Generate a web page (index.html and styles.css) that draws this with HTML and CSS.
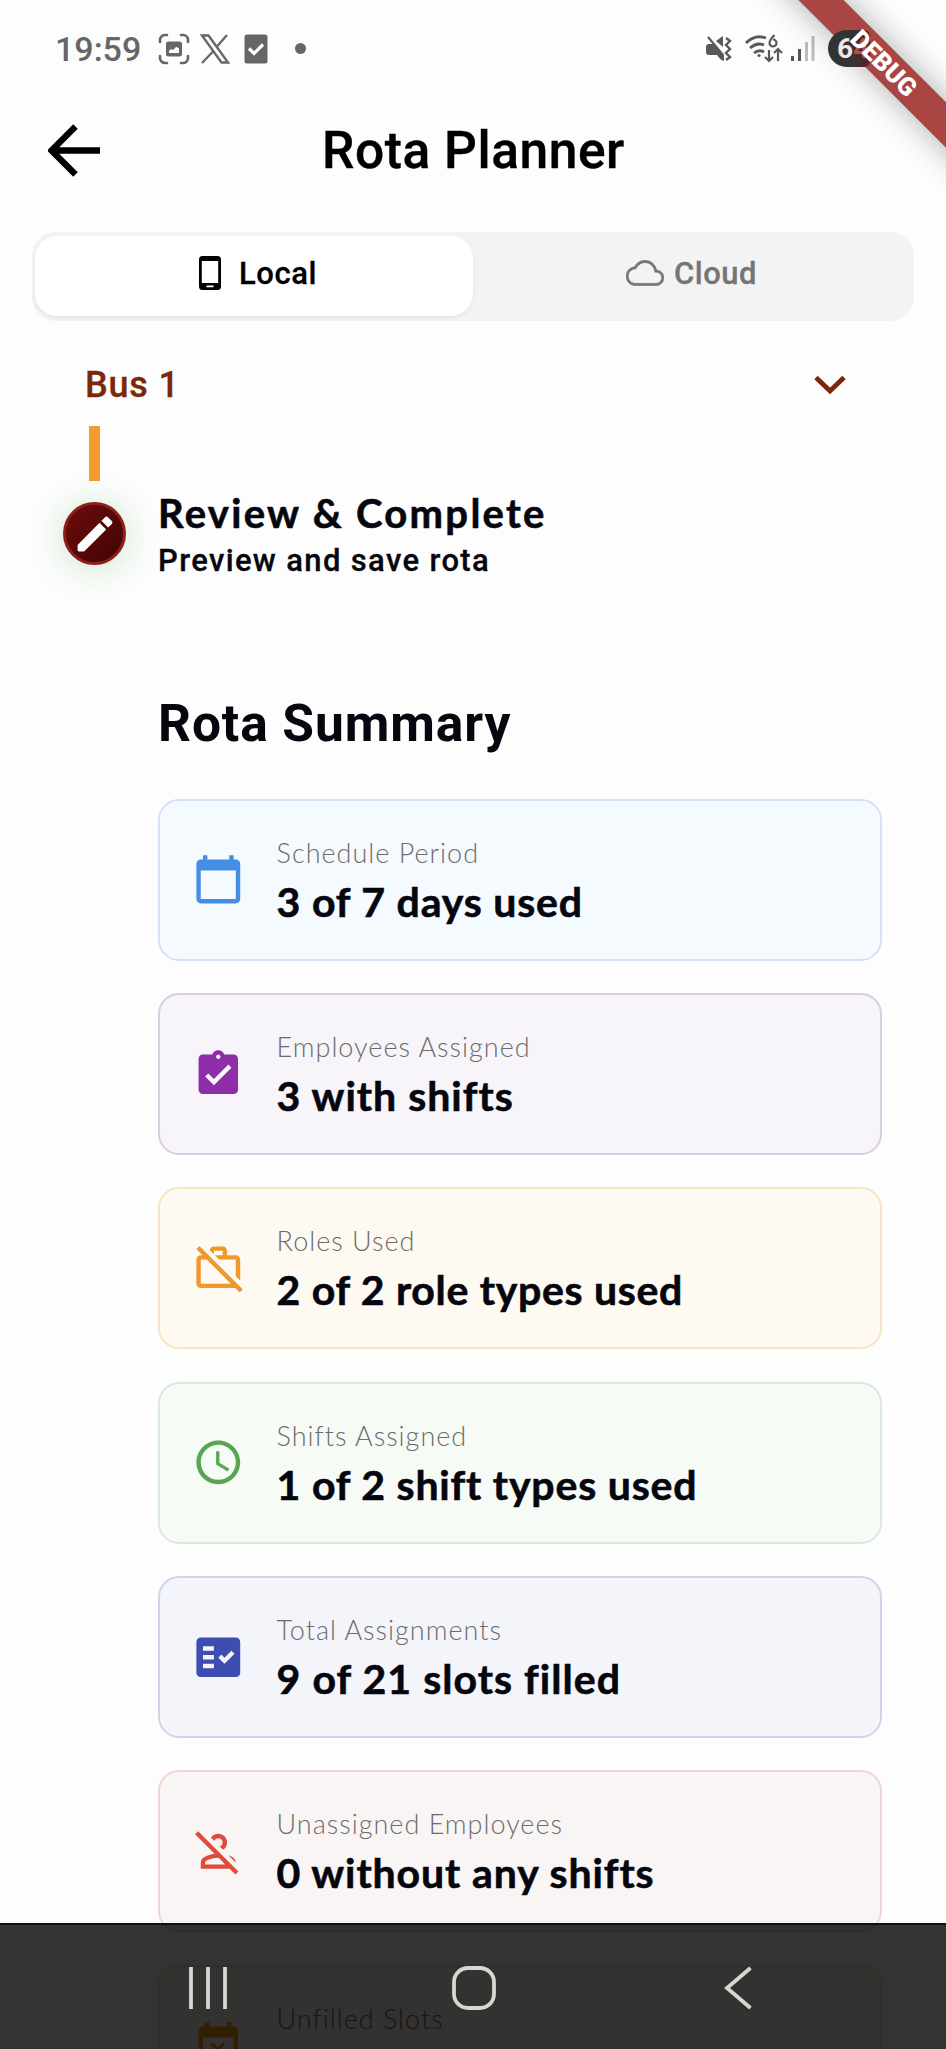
FILE: index.html
```html
<!DOCTYPE html>
<html lang="en">
<head>
<meta charset="utf-8">
<title>Rota Planner</title>
<link rel="stylesheet" href="styles.css">
</head>
<body>
<div class="screen">
  <div class="status">
    <span class="clock">19:59</span>
    <svg class="st-shot" width="32" height="32" viewBox="0 0 32 32"><g fill="none" stroke="#666" stroke-width="2.6" stroke-linecap="round"><path d="M2 9V7a5 5 0 0 1 5-5h2M23 2h2a5 5 0 0 1 5 5v2M30 23v2a5 5 0 0 1-5 5h-2M9 30H7a5 5 0 0 1-5-5v-2"/></g><path fill="#666" fill-rule="evenodd" d="M10.500 8.500h11a2.500 2.500 0 0 1 2.500 2.500v10a2.500 2.500 0 0 1-2.500 2.500h-11A2.500 2.500 0 0 1 8 21V11a2.500 2.500 0 0 1 2.500-2.500zM11 20h10v-5l-3-1-3 3-2-1-2 2z"/></svg>
    <svg class="st-x" width="30" height="30" viewBox="0 0 30 30" fill="none" stroke="#666" stroke-width="2.300"><path d="M2 1.500h6.500L28 28.500h-6.500zM27 1L16.500 13M13 17.500L2 29"/></svg>
    <svg class="st-check" width="24" height="30" viewBox="0 0 24 30"><rect x=".5" y=".5" width="23" height="29" rx="2.500" fill="#666"/><path d="M5 14.500l5 5 9-9" fill="none" stroke="#fff" stroke-width="3.200"/></svg>
    <span class="st-dot"></span>
    <svg class="st-mute" width="28" height="28" viewBox="0 0 28 28"><path fill="#595959" d="M1 12q0-3 3-3h5l10 11v6q-4-1-7-6H4q-3 0-3-3zM11 6l7-5v11z"/><path d="M3 2l15 18" stroke="#595959" stroke-width="2.200"/><path d="M21 3l4 3-4 4 4 4-4 4 4 4-4 3" fill="none" stroke="#595959" stroke-width="2.400"/></svg>
    <svg class="st-wifi" width="40" height="30" viewBox="0 0 40 30" fill="none" stroke="#595959" stroke-width="2.800"><path d="M2 9Q11 0 22 4M6 14q7-6 14-3M10 19q5-4 10-1"/><circle cx="15" cy="21.500" r="1.600" fill="#595959" stroke="none"/><path d="M25 16v11m-4-4l4 4 4-4M34 27V15m-4 4l4-4 4 4" stroke-width="2.200"/><path d="M30.500 1q-5 5-5 8a3.500 3.500 0 1 0 3.500-3.500" stroke-width="2.200"/></svg>
    <svg class="st-signal" width="24" height="26" viewBox="0 0 24 26"><path fill="#555" d="M0 20h3v5H0zM7 13h3v12H7z"/><path fill="#bdbdbd" d="M14 6h3v19h-3zM20.500 0h3v25h-3z"/></svg>
    <span class="battery">6<i>4</i></span>
  </div>
  <header class="appbar">
    <svg class="back" width="54" height="54" viewBox="0 0 54 54" fill="none" stroke="#000" stroke-width="6.400"><path d="M52 26.500H4M27.500 2.500l-24 24 24 24"/></svg>
    <h1>Rota Planner</h1>
  </header>
  <div class="tabs">
    <div class="tab active">
      <svg width="22" height="34" viewBox="0 0 22 34"><path fill="#000" fill-rule="evenodd" d="M3.500 0h15A3.500 3.500 0 0 1 22 3.500v27a3.500 3.500 0 0 1-3.500 3.500h-15A3.500 3.500 0 0 1 0 30.500v-27A3.500 3.500 0 0 1 3.500 0zM2.800 5v22h16.400V5zM7.500 29.500v1.800h7v-1.800z"/></svg>
      <span>Local</span>
    </div>
    <div class="tab cloud">
      <svg width="38" height="26" viewBox="0 4 24 16" fill="#757575"><path stroke="#757575" stroke-width=".3" d="M19.350 10.040C18.670 6.590 15.640 4 12 4 9.110 4 6.600 5.640 5.350 8.040 2.340 8.360 0 10.910 0 14c0 3.310 2.690 6 6 6h13c2.760 0 5-2.240 5-5 0-2.640-2.050-4.780-4.650-4.960zM19 18.500H6c-2.480 0-4.500-2-4.500-4.500 0-2.320 1.750-4.240 4.010-4.470l.8-.08.4-.72C7.740 6.760 9.770 5.500 12 5.500c2.860 0 5.320 2.030 5.880 4.830l.22 1.130 1.150.08c1.800.12 3.250 1.630 3.250 3.460 0 1.930-1.570 3.500-3.500 3.500z"/></svg>
      <span>Cloud</span>
    </div>
  </div>
  <div class="picker">
    <span>Bus 1</span>
    <svg width="32" height="20" viewBox="0 0 32 20" fill="none" stroke="#7a2808" stroke-width="4.800"><path d="M2 2.500l14 13.500L30 2.500"/></svg>
  </div>
  <div class="connector"></div>
  <div class="step">
    <div class="badge"><svg width="48" height="48" viewBox="0 0 24 24" fill="#fff"><path d="M3.300 17.450V20q0 .7.700.7h2.550L17.610 9.740l-3.350-3.350zM20.410 6.940c.39-.39.39-1.020 0-1.410l-1.940-1.940c-.39-.39-1.020-.39-1.410 0l-1.830 1.830 3.350 3.350z"/></svg></div>
    <div class="step-text"><h2>Review &amp; Complete</h2><p>Preview and save rota</p></div>
  </div>
  <main>
    <h3>Rota Summary</h3>
    <div class="cards">
      <section class="card blue"><svg viewBox="0 0 24 24"><path d="M20 3h-1V1h-2v2H7V1H5v2H4c-1.100 0-2 .9-2 2v16c0 1.100.9 2 2 2h16c1.100 0 2-.9 2-2V5c0-1.100-.9-2-2-2zm0 18H4V8h16v13z"/></svg><div><p class="label l1">Schedule Period</p><p class="value v1">3 of 7 days used</p></div></section>
      <section class="card purple"><svg viewBox="0 0 24 24"><path d="M19 3h-4.180C14.400 1.840 13.300 1 12 1c-1.300 0-2.400.84-2.820 2H5c-1.100 0-2 .9-2 2v14c0 1.100.9 2 2 2h14c1.100 0 2-.9 2-2V5c0-1.100-.9-2-2-2zm-7 0c.55 0 1 .45 1 1s-.45 1-1 1-1-.45-1-1 .45-1 1-1zm-2 14l-4-4 1.410-1.410L10 14.170l6.590-6.590L18 9l-8 8z"/></svg><div><p class="label l2">Employees Assigned</p><p class="value v2">3 with shifts</p></div></section>
      <section class="card amber"><svg viewBox="0 0 24 24"><path d="M10 4h4v2h-3.600l2 2H20v7.600l2 2V8c0-1.110-.89-2-2-2h-4V4c0-1.110-.89-2-2-2h-4c-.99 0-1.800.7-1.960 1.640L10 5.600V4zM3.400 1.840L1.990 3.250 4.740 6H4c-1.110 0-1.990.89-1.990 2L2 19c0 1.110.89 2 2 2h15.740l2 2 1.410-1.410L3.400 1.840zM4 19V8h2.740l11 11H4z"/></svg><div><p class="label l3">Roles Used</p><p class="value v3">2 of 2 role types used</p></div></section>
      <section class="card green"><svg viewBox="0 0 24 24"><path d="M11.990 2C6.470 2 2 6.480 2 12s4.470 10 9.990 10C17.520 22 22 17.520 22 12S17.520 2 11.990 2zM12 20c-4.420 0-8-3.580-8-8s3.580-8 8-8 8 3.580 8 8-3.580 8-8 8zm.5-13H11v6l5.250 3.150.75-1.230-4.500-2.670z"/></svg><div><p class="label l4">Shifts Assigned</p><p class="value v4">1 of 2 shift types used</p></div></section>
      <section class="card indigo"><svg viewBox="0 0 24 24"><path fill-rule="evenodd" d="M20 3H4c-1.100 0-2 .9-2 2v14c0 1.100.9 2 2 2h16c1.100 0 2-.9 2-2V5c0-1.100-.9-2-2-2zM10 17H5v-2h5v2zm0-4H5v-2h5v2zm0-4H5V7h5v2zm4.820 6L12 12.160l1.410-1.410 1.410 1.420L17.990 9l1.420 1.420L14.820 15z"/></svg><div><p class="label l5">Total Assignments</p><p class="value v5">9 of 21 slots filled</p></div></section>
      <section class="card red"><svg viewBox="0 0 24 24"><path d="M8.650 5.820C9.360 4.720 10.600 4 12 4c2.210 0 4 1.790 4 4 0 1.400-.72 2.640-1.820 3.350L12.660 9.830C13.440 9.560 14 8.840 14 8c0-1.100-.9-2-2-2-.84 0-1.560.56-1.820 1.350L8.650 5.820zM20 17.170c-.02-1.100-.63-2.110-1.610-2.620-.54-.28-1.130-.54-1.770-.76L20 17.170zM21.190 21.190L2.810 2.810 1.390 4.220l8.890 8.890c-1.810.23-3.390.79-4.670 1.450C4.610 15.070 4 16.100 4 17.220V20h13.170l2.610 2.610 1.410-1.420zM6 18v-.78c0-.38.2-.72.52-.88C7.710 15.730 9.630 15 12 15h.17l3 3H6z"/></svg><div><p class="label l6">Unassigned Employees</p><p class="value v6">0 without any shifts</p></div></section>
      <section class="card orange"><svg viewBox="0 0 24 24"><path d="M9.310 17l2.440-2.440L14.190 17l1.060-1.060-2.440-2.440 2.440-2.440L14.190 10l-2.440 2.440L9.310 10l-1.060 1.060 2.440 2.440-2.440 2.440L9.310 17zM19 3h-1V1h-2v2H8V1H6v2H5c-1.110 0-1.990.9-1.990 2L3 19c0 1.100.89 2 2 2h14c1.100 0 2-.9 2-2V5c0-1.100-.9-2-2-2zm0 16H5V8h14v11z"/></svg><div><p class="label l7">Unfilled Slots</p></div></section>
    </div>
  </main>
  <div class="ribbon-clip"><div class="ribbon band"></div></div>
  <div class="ribbon-clip top"><div class="ribbon">DEBUG</div></div>
  <nav class="sysnav">
    <svg width="40" height="44" viewBox="0 0 40 44" stroke="#d6d6d2" stroke-width="3.800"><path d="M2 1v42M19 1v42M36 1v42"/></svg>
    <svg width="44" height="44" viewBox="0 0 44 44" fill="none" stroke="#d6d6d2" stroke-width="3.800"><rect x="2" y="2" width="40" height="40" rx="14"/></svg>
    <svg width="28" height="44" viewBox="0 0 28 44" fill="none" stroke="#d6d6d2" stroke-width="3.800"><path d="M26.500 2L3 22l23.500 20"/></svg>
  </nav>
</div>
</body>
</html>
```
FILE: styles.css
```css
* { box-sizing: border-box; margin: 0; padding: 0; }
body { background: #fdfdfd; font-family: Roboto, "Liberation Sans", sans-serif; }
svg { display: block; flex: none; }
.screen { position: relative; width: 946px; height: 2049px; overflow: hidden; background: #fdfdfd; color: #06060e; }

.status { display: flex; align-items: center; height: 97px; padding-left: 55px; }
.clock { width: 103px; font-size: 34px; font-weight: 500; color: #666; }
.st-x { margin-left: 10px; }
.st-check { margin-left: 14px; }
.st-dot { width: 11px; height: 11px; margin-left: 27px; border-radius: 50%; background: #666; }
.st-mute { margin-left: 399px; }
.st-wifi { margin-left: 11px; }
.st-signal { margin-left: 7px; }
.battery { position: relative; z-index: 2; width: 42px; height: 37px; margin-left: 13px; padding-left: 9px; overflow: hidden; border-radius: 19px 6px 6px 19px; background: linear-gradient(90deg, #333 55%, #5a2223); color: #f1e4e4; font-size: 28px; font-weight: 700; line-height: 37px; }
.battery i { font-style: normal; color: #b8484a; }

.appbar { display: flex; align-items: center; height: 107px; padding-left: 48px; }
.appbar h1 { margin-left: 220px; font-size: 51.5px; font-weight: 500; letter-spacing: .55px; color: #000; white-space: nowrap; -webkit-text-stroke: .4px currentColor; }

.tabs { display: flex; width: 882px; height: 89px; margin: 28px 0 0 32px; padding: 4px 3px 5px; border-radius: 24px; background: #f3f3f3; }
.tab { display: flex; flex: 0 0 50%; align-items: center; justify-content: center; padding-bottom: 6px; font-size: 31px; font-weight: 500; letter-spacing: .55px; color: #757575; -webkit-text-stroke: .3px currentColor; }
.tab.active { padding-left: 8px; gap: 18px; border-radius: 22px; background: #fff; color: #000; box-shadow: 0 2px 5px rgba(0,0,0,.06); }
.tab.cloud { padding-right: 1px; gap: 10px; }

.picker { display: flex; align-items: center; justify-content: space-between; height: 105px; padding: 22px 100px 0 85px; font-size: 36px; font-weight: 500; letter-spacing: .8px; color: #7a2808; -webkit-text-stroke: .3px currentColor; }
.connector { width: 11px; height: 55px; margin-left: 89px; background: #f39c2c; }
.step { display: flex; margin: 21px 0 0 63px; }
.badge { display: flex; align-items: center; justify-content: center; width: 63px; height: 63px; border-radius: 50%; border: 3px solid #8f1d1a; background: linear-gradient(135deg, #6d0b0b, #420404); box-shadow: 0 3px 32px 6px rgba(76,175,80,.2); }
.step-text { margin: -13px 0 0 32px; white-space: nowrap; }
.step-text h2 { font: 700 40px/48px Lato, sans-serif; letter-spacing: 2.300px; -webkit-text-stroke: .6px currentColor; }
.step-text p { font-size: 31px; font-weight: 500; line-height: 48px; letter-spacing: 1.350px; -webkit-text-stroke: .3px currentColor; }

main { padding: 108.500px 64px 0 158px; }
main h3 { font-size: 51.5px; font-weight: 700; line-height: 60px; letter-spacing: .9px; white-space: nowrap; }
.cards { display: flex; flex-direction: column; gap: 32.400px; margin-top: 45px; }
.card { display: flex; align-items: center; height: 162px; padding-left: 32px; border: 2.500px solid; border-radius: 21px; }
.card svg { width: 52.600px; height: 52.600px; fill: currentColor; }
.card div { margin-left: 32px; height: 100px; white-space: nowrap; }
.label { font: 300 27px/36px Lato, sans-serif; letter-spacing: 1px; color: #6c6c6c; padding-top: 5px; font-variant-ligatures: none; }
.value { font: 700 41px/50px Lato, sans-serif; color: #06060e; padding-top: 6px; font-variant-ligatures: none; -webkit-text-stroke: .6px currentColor; }
.v1 { letter-spacing: .8px; }
.v2 { letter-spacing: 1px; }
.v3 { letter-spacing: .7px; }
.v4 { letter-spacing: .8px; }
.v5 { letter-spacing: 1.05px; }
.v6 { letter-spacing: .9px; }
.blue { color: #448fe3; background: #f5fafe; border-color: #d3e3f3; }
.purple { color: #8e2da8; background: #f7f4fa; border-color: #d8cde3; }
.amber { color: #f0982c; background: #fefaf2; border-color: #f9e4c2; }
.green { color: #57a654; background: #f6fbf6; border-color: #d8ead8; }
.indigo { color: #3d4db0; background: #f3f5fa; border-color: #d0d4ea; }
.red { color: #e04c3c; background: #faf5f5; border-color: #f1d5d6; }
.orange { color: #f0a000; background: #fefaf0; border-color: #f9e4c2; }

.ribbon-clip { position: absolute; z-index: 1; top: 0; right: 0; width: 260px; height: 260px; overflow: hidden; }
.ribbon-clip.top { z-index: 3; }
.ribbon { position: absolute; left: 48px; top: 47px; width: 300px; height: 32px; transform: rotate(45deg); color: #fff; font-size: 25.500px; font-weight: 900; line-height: 32px; text-align: center; }
.ribbon.band { background: #a94644; box-shadow: 0 0 32px rgba(0,0,0,.32); }
.sysnav { position: absolute; left: 0; right: 0; bottom: 0; height: 126px; display: flex; justify-content: space-between; padding: 41px 194px 0 189px; border-top: 2px solid #111; background: rgba(0,0,0,.8); }
.sysnav svg:nth-child(2) { margin-right: 6px; }
```
